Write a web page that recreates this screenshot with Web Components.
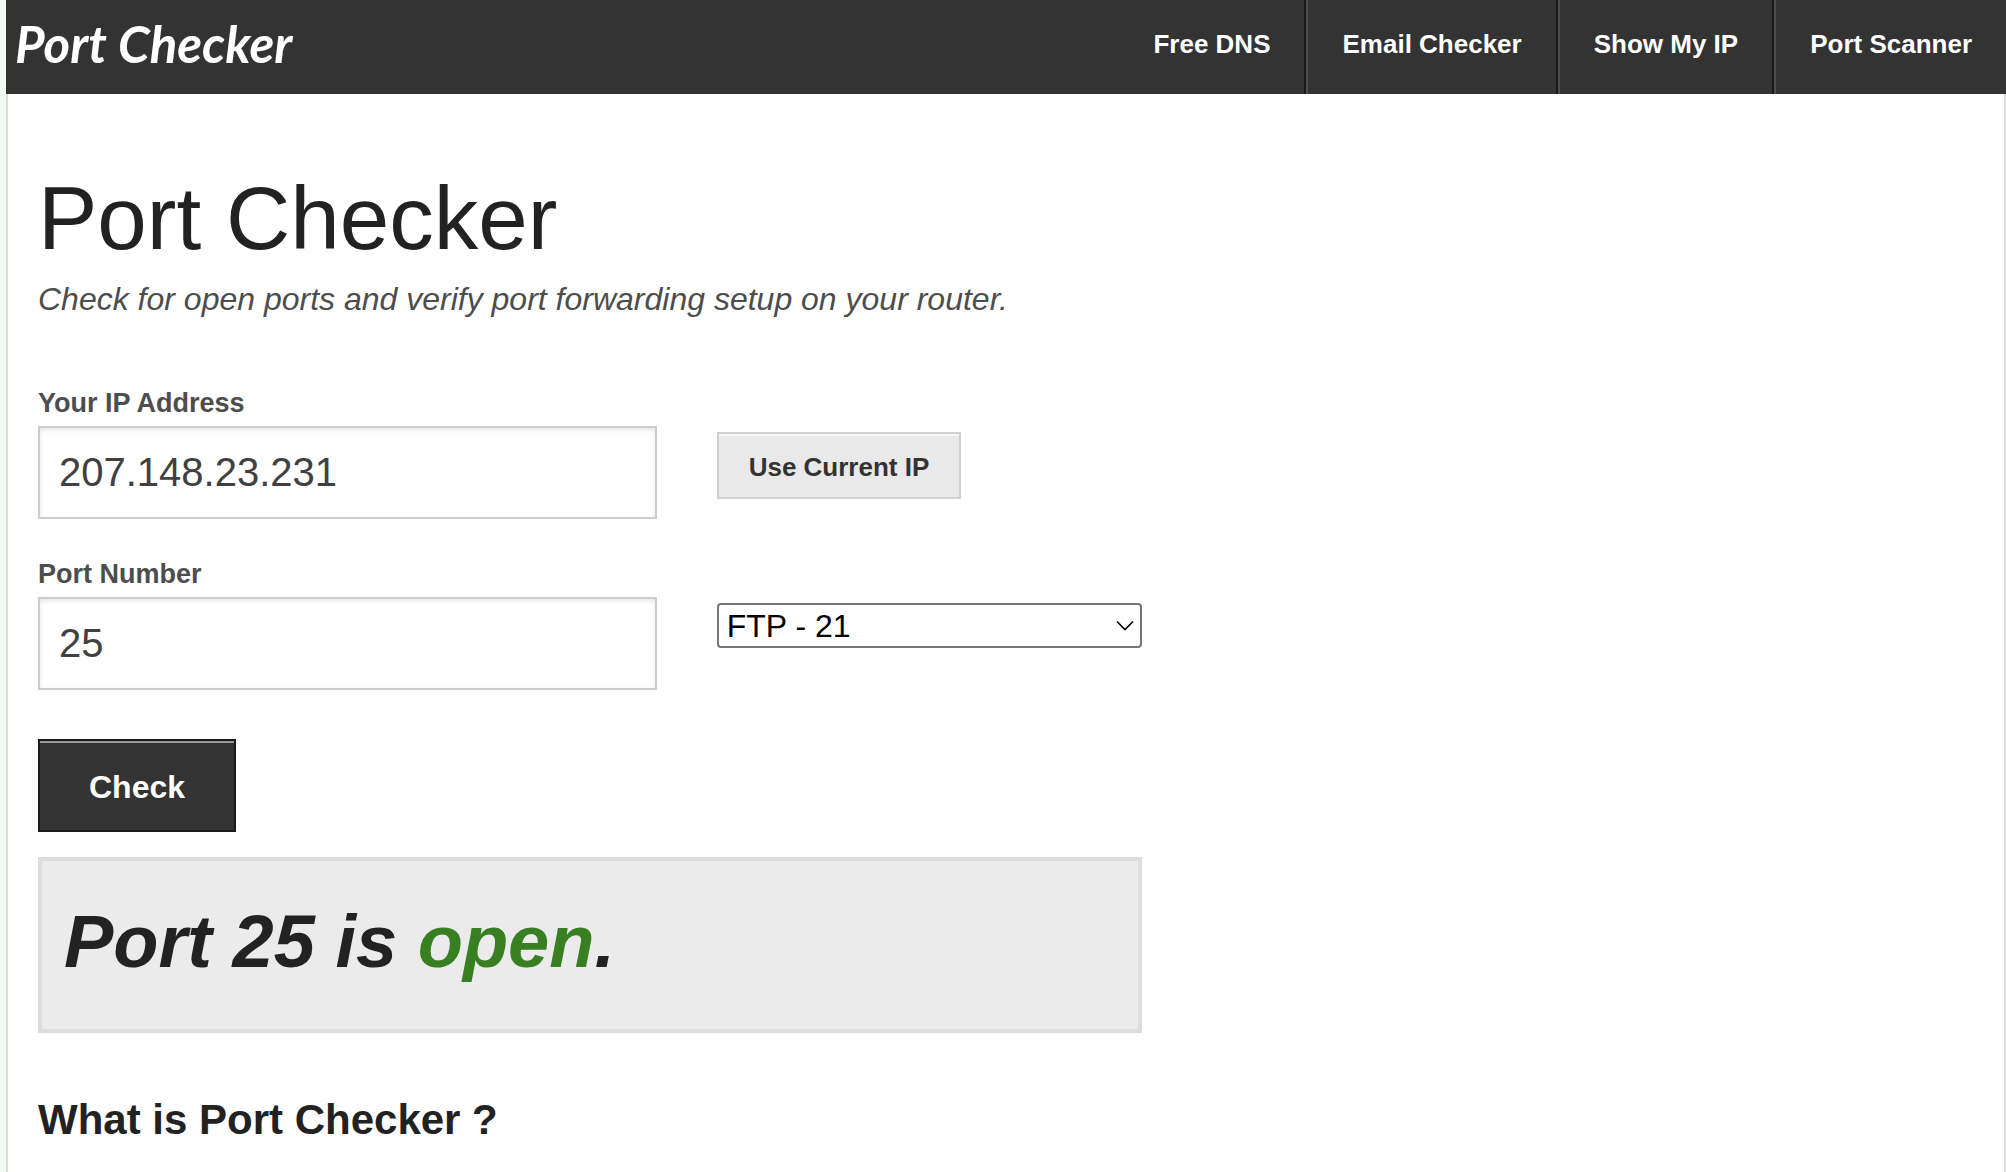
<!DOCTYPE html>
<html lang="en">
<head>
<meta charset="utf-8">
<meta name="viewport" content="width=device-width, initial-scale=1">
<title>Port Checker</title>
<style>
  body {
    margin: 0;
    padding-left: 6px;
    min-height: 100vh;
    box-sizing: border-box;
    display: flex;
    flex-flow: column nowrap;
    background: #f4fbf4;
    color: #222;
    font-family: "Helvetica Neue", "Liberation Sans", Arial, sans-serif;
  }
</style>
</head>
<body>
<site-header>
  <nav-item href="#dns">Free DNS</nav-item>
  <nav-item href="#email">Email Checker</nav-item>
  <nav-item href="#ip">Show My IP</nav-item>
  <nav-item href="#scanner">Port Scanner</nav-item>
</site-header>
<page-body>
  <page-title sub="Check for open ports and verify port forwarding setup on your router.">Port Checker</page-title>
  <port-form ip="207.148.23.231" port="25"></port-form>
  <port-result port="25" status="open"></port-result>
  <section-title>What is Port Checker ?</section-title>
</page-body>

<script>
class Base extends HTMLElement {
  constructor() {
    super();
    this.attachShadow({ mode: 'open' });
  }
  connectedCallback() {
    this.shadowRoot.innerHTML = this.render();
    this.ready();
  }
  ready() {}
  attr(name) {
    return this.getAttribute(name) || '';
  }
  gid(id) {
    return this.shadowRoot.getElementById(id);
  }
}

customElements.define('site-header',
class extends Base {
  render() {
    return `
      <style>
        :host {
          display: flex;
          justify-content: space-between;
          height: 94px;
          overflow: hidden;
          background: #333;
          color: #fff;
        }
        a {
          padding-left: 9px;
          color: inherit;
          font: italic 700 51px/88px Lato, "Liberation Sans", sans-serif;
          text-decoration: none;
          white-space: nowrap;
        }
        nav {
          display: flex;
        }
      </style>
      <a href="#home">Port Checker</a>
      <nav><slot></slot></nav>
    `;
  }
});

customElements.define('nav-item',
class extends Base {
  render() {
    return `
      <style>
        :host {
          display: block;
          border-left: 2px solid #4d4d4d;
          border-right: 2px solid #1a1a1a;
        }
        :host(:first-child) { border-left: 0; }
        :host(:last-child) { border-right: 0; }
        a {
          display: block;
          padding: 0 34px;
          color: #fff;
          font-size: 26px;
          font-weight: bold;
          line-height: 88px;
          text-decoration: none;
          white-space: nowrap;
        }
      </style>
      <a href="${this.attr('href')}"><slot></slot></a>
    `;
  }
});

customElements.define('page-body',
class extends Base {
  render() {
    return `
      <style>
        :host {
          display: block;
          flex-grow: 1;
          padding: 71px 30px 22px;
          border: solid #ddd;
          border-width: 0 2px;
          background: #fff;
        }
        main { max-width: 1104px; }
      </style>
      <main><slot></slot></main>
    `;
  }
});

customElements.define('page-title',
class extends Base {
  render() {
    return `
      <style>
        :host { display: block; }
        h1 {
          margin: 0;
          font-size: 89px;
          font-weight: normal;
          line-height: 106px;
        }
        p {
          margin: 0;
          color: #4d4d4d;
          font-size: 32px;
          font-style: italic;
          line-height: 56px;
        }
      </style>
      <h1><slot></slot></h1>
      <p>${this.attr('sub')}</p>
    `;
  }
});

// label + text box on the left, whatever is slotted on the right
customElements.define('form-field',
class extends Base {
  render() {
    return `
      <style>
        :host {
          display: grid;
          grid-template-columns: 16fr 11fr;
          column-gap: 60px;
        }
        label {
          display: block;
          color: #4d4d4d;
          font-size: 27px;
          font-weight: bold;
          line-height: 46px;
        }
        input {
          display: block;
          width: 100%;
          height: 93px;
          box-sizing: border-box;
          padding: 0 19px;
          border: 2px solid #ccc;
          border-radius: 0;
          box-shadow: inset 0 2px 4px rgba(0, 0, 0, .1);
          background: #fff;
          color: #404040;
          font-family: inherit;
          font-size: 40px;
        }
        .side { padding-top: 52px; }
      </style>
      <div>
        <label for="box">${this.attr('label')}</label>
        <input id="box" type="text" value="${this.attr('value')}">
      </div>
      <div class="side"><slot></slot></div>
    `;
  }
});

customElements.define('push-button',
class extends Base {
  render() {
    return `
      <style>
        :host { display: block; }
        button {
          display: block;
          height: 67px;
          box-sizing: border-box;
          padding: 3px 30px 0;
          border: 2px solid #d0d0d0;
          box-shadow: inset 0 2px 0 rgba(255, 255, 255, .5);
          background: #e9e9e9;
          color: #333;
          font-family: inherit;
          font-size: 26px;
          font-weight: bold;
          white-space: nowrap;
          cursor: pointer;
        }
        :host([primary]) button {
          height: 93px;
          padding: 3px 49px 0;
          border-color: #1a1a1a;
          background: #333;
          color: #fff;
          font-size: 32px;
        }
      </style>
      <button type="button"><slot></slot></button>
    `;
  }
});

customElements.define('port-select',
class extends Base {
  render() {
    const ports = [['FTP', 21], ['SSH', 22], ['TELNET', 23], ['SMTP', 25], ['DNS', 53], ['HTTP', 80], ['POP3', 110], ['HTTPS', 443]];
    return `
      <style>
        :host { display: grid; align-items: center; }
        select, svg { grid-area: 1 / 1; }
        select {
          appearance: none;
          width: 100%;
          height: 45px;
          box-sizing: border-box;
          padding: 0 8px;
          border: 2px solid #767676;
          border-radius: 4px;
          background: #fff;
          color: #000;
          font-family: inherit;
          font-size: 32px;
        }
        svg {
          justify-self: end;
          margin-right: 8px;
          pointer-events: none;
        }
      </style>
      <select id="ports" aria-label="Common ports">
        ${ports.map(([n, p]) => `<option value="${p}">${n} - ${p}</option>`).join('')}
      </select>
      <svg width="18" height="12" viewBox="0 0 18 12" fill="none" stroke="#000" stroke-width="1.6">
        <path d="M1 1.5 9 9.5 17 1.5"/>
      </svg>
    `;
  }
});

customElements.define('port-form',
class extends Base {
  render() {
    return `
      <style>
        :host {
          display: block;
          margin-top: 53px;
        }
        .fields {
          display: grid;
          row-gap: 32px;
          margin-bottom: 49px;
        }
      </style>
      <form>
        <div class="fields">
          <form-field id="ip" label="Your IP Address" value="${this.attr('ip')}">
            <push-button id="current">Use Current IP</push-button>
          </form-field>
          <form-field id="port" label="Port Number" value="${this.attr('port')}">
            <port-select id="common"></port-select>
          </form-field>
        </div>
        <push-button primary>Check</push-button>
      </form>
    `;
  }
  ready() {
    this.gid('current').addEventListener('click', () => {
      this.gid('ip').gid('box').value = this.attr('ip');
    });
    const select = this.gid('common').gid('ports');
    select.addEventListener('change', () => {
      this.gid('port').gid('box').value = select.value;
    });
  }
});

customElements.define('port-result',
class extends Base {
  render() {
    return `
      <style>
        :host {
          display: block;
          margin-top: 25px;
          padding: 0 22px 6px;
          border: 4px solid #ddd;
          background: #ebebeb;
        }
        p {
          margin: 0;
          font-size: 74px;
          font-style: italic;
          font-weight: bold;
          line-height: 162px;
        }
        .open { color: #387f22; }
        .closed { color: #c60f13; }
      </style>
      <p>Port ${this.attr('port')} is <span class="${this.attr('status')}">${this.attr('status')}</span>.</p>
    `;
  }
});

customElements.define('section-title',
class extends Base {
  render() {
    return `
      <style>
        :host { display: block; margin-top: 57px; }
        h2 {
          margin: 0;
          font-size: 42px;
          line-height: 60px;
        }
      </style>
      <h2><slot></slot></h2>
    `;
  }
});
</script>
</body>
</html>
